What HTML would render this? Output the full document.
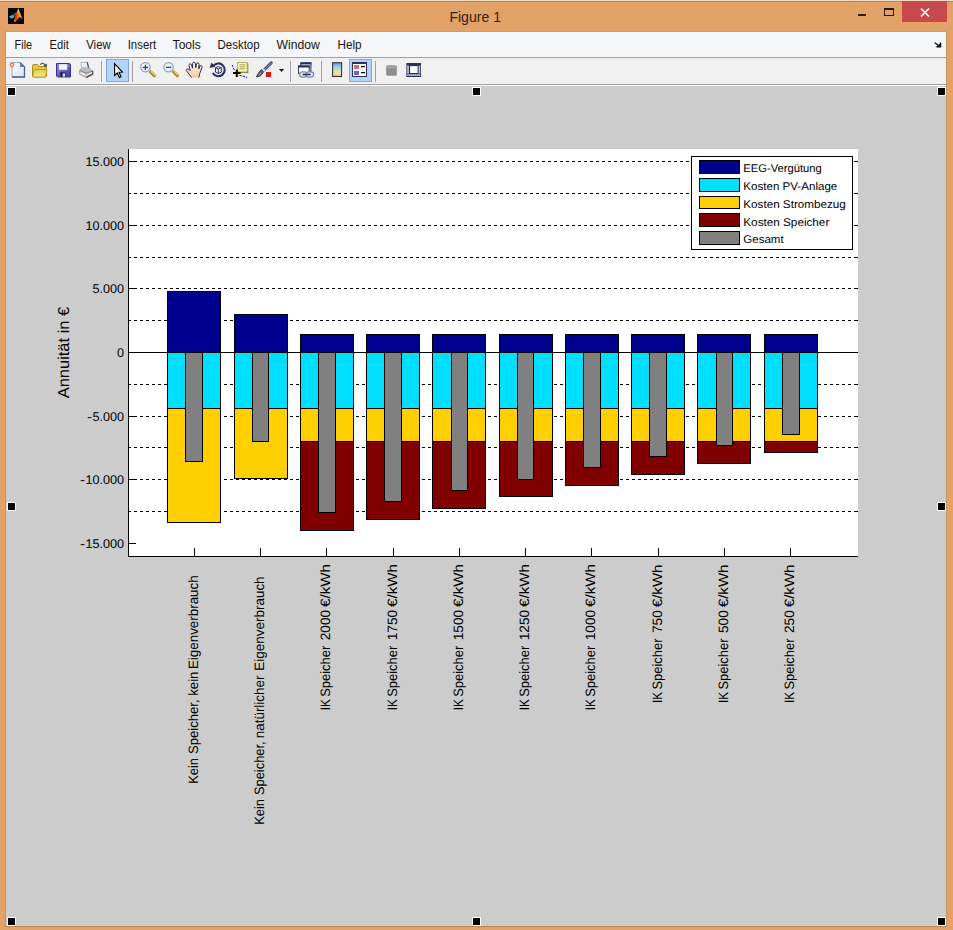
<!DOCTYPE html>
<html><head><meta charset="utf-8"><title>Figure 1</title>
<style>
html,body{margin:0;padding:0}
body{width:953px;height:930px;overflow:hidden;background:#E2A166;position:relative;font-family:"Liberation Sans",sans-serif;}
#topl0{position:absolute;left:0;top:0;width:953px;height:1px;background:#F3DCC4}
#topl1{position:absolute;left:0;top:1px;width:953px;height:1px;background:#B98555}
#title{position:absolute;left:0;top:5px;width:953px;text-align:center;font-size:15px;color:#2E1D0E;line-height:24px}
#menubar{position:absolute;left:6px;top:32px;width:940px;height:25px;background:#F5F6F7}
#menubar span{position:absolute;top:0;line-height:25px;font-size:12px;color:#111}
#msep{position:absolute;left:6px;top:57px;width:940px;height:1px;background:#A0A0A0}
#toolbar{position:absolute;left:6px;top:58px;width:940px;height:26px;background:#F0F0F0}
#tsep{position:absolute;left:6px;top:84px;width:940px;height:1px;background:#A0A0A0}
#tsep2{position:absolute;left:6px;top:85px;width:940px;height:1px;background:#FFFFFF}
#fig{position:absolute;left:6px;top:86px;width:940px;height:840px;background:#CCCCCC}
#botl{position:absolute;left:5px;top:926px;width:942px;height:1px;background:#B98555}
#lftl{position:absolute;left:5px;top:31px;width:1px;height:896px;background:#C8925F}
#rgtl{position:absolute;left:946px;top:31px;width:1px;height:896px;background:#C8925F}
#midl{position:absolute;left:5px;top:31px;width:942px;height:1px;background:#D49A64}
#chart{position:absolute;left:0;top:0}
#chart text{font-family:"Liberation Sans",sans-serif;fill:#000}
.vs{position:absolute;top:61px;width:1px;height:21px;background:#9A9A9A}
.hl{position:absolute;top:59px;height:22px;width:22px;background:#B4D2F5;border:1px solid #6FA2E0;box-sizing:content-box}
</style></head><body>
<div id="topl0"></div><div id="topl1"></div>

<div id="menubar"></div><div id="msep"></div>
<div id="toolbar"></div><div id="tsep"></div><div id="tsep2"></div>
<div id="fig"></div><div id="botl"></div><div id="lftl"></div><div id="rgtl"></div><div id="midl"></div>
<svg id="chromesvg" width="953" height="930" viewBox="0 0 953 930" style="position:absolute;left:0;top:0"><defs>
<linearGradient id="gPage" x1="0" y1="0" x2="1" y2="1"><stop offset="0" stop-color="#FFFFFF"/><stop offset="1" stop-color="#D5E2F8"/></linearGradient>
<linearGradient id="gFold" x1="0" y1="0" x2="0" y2="1"><stop offset="0" stop-color="#E0C848"/><stop offset="1" stop-color="#F8EC90"/></linearGradient>
<linearGradient id="gSave" x1="0" y1="0" x2="1" y2="1"><stop offset="0" stop-color="#8C8CE0"/><stop offset="1" stop-color="#3C3C98"/></linearGradient>
<linearGradient id="gCb" x1="0" y1="0" x2="0" y2="1"><stop offset="0" stop-color="#6C94E8"/><stop offset="0.35" stop-color="#98D4E4"/><stop offset="0.6" stop-color="#CCE8A8"/><stop offset="0.8" stop-color="#F2E090"/><stop offset="1" stop-color="#F0B494"/></linearGradient>
<linearGradient id="gHandle" x1="0" y1="0" x2="1" y2="0"><stop offset="0" stop-color="#F0DC90"/><stop offset="1" stop-color="#B08828"/></linearGradient>
<radialGradient id="gLens" cx="0.4" cy="0.35" r="0.7"><stop offset="0" stop-color="#FFFFFF"/><stop offset="1" stop-color="#CFE6F6"/></radialGradient>
<linearGradient id="gMl" x1="0" y1="0" x2="1" y2="0"><stop offset="0" stop-color="#F8D060"/><stop offset="0.5" stop-color="#E86820"/><stop offset="1" stop-color="#982810"/></linearGradient>
<linearGradient id="gMl2" x1="0" y1="0" x2="1" y2="0"><stop offset="0" stop-color="#8E2C10"/><stop offset="0.45" stop-color="#E8601C"/><stop offset="0.7" stop-color="#F68A28"/><stop offset="1" stop-color="#F0A070"/></linearGradient>
</defs>
<!-- matlab window icon -->
<g>
<rect x="8" y="8" width="16" height="16" fill="#050505"/>
<path d="M8.9 16.4 L12 15 L14.3 15.8 L13.7 17.5 L11.4 18.7 Z" fill="#4AAEE0"/>
<path d="M12 15 L16.8 11.4 L16.2 14.2 L14.3 15.8 Z" fill="#50627E" opacity="0.85"/>
<path d="M15.6 21.4 C16.8 20.6 17.6 18.6 19 17.4 C20.2 16.4 21.4 17.4 22.7 19.5 C21.5 19.6 20.4 20.8 19.4 21.8 C18 22.6 16.6 22.4 15.6 21.4 Z" fill="#3A1206" opacity="0.8"/>
<path d="M18.4 9.1 C17 11.5 15 15 13.8 19.5 C13.8 21 14.6 21.9 15.6 21.4 C16.8 20.6 17.6 18.6 19 17.4 C20.2 16.4 21.4 17.4 22.7 19.5 C21.2 16 19.8 12.4 18.4 9.1 Z" fill="url(#gMl2)"/>
<path d="M18.4 9.1 C18.9 12 19 14.5 19 17.4 C20.2 16.4 21.4 17.4 22.7 19.5 C21.2 16 19.8 12.4 18.4 9.1 Z" fill="#F4B088" opacity="0.55"/>
<path d="M18.4 9.3 C18.1 10.6 18 11.8 18.2 13" stroke="#F8DC70" stroke-width="1" fill="none" stroke-linecap="round"/>
<ellipse cx="14.9" cy="20.9" rx="0.9" ry="0.7" fill="#FFC890"/>
</g>
<!-- window buttons -->
<rect x="858" y="14" width="8" height="2" fill="#2A1A0C" shape-rendering="crispEdges"/>
<g shape-rendering="crispEdges" fill="#2A1A0C"><rect x="884" y="8" width="10" height="2"/><rect x="884" y="8" width="1" height="8"/><rect x="893" y="8" width="1" height="8"/><rect x="884" y="15" width="10" height="1"/></g>
<rect x="902" y="1" width="45" height="21" fill="#C8494D" shape-rendering="crispEdges"/>
<path d="M921 8.5 L929 16.5 M929 8.5 L921 16.5" stroke="#fff" stroke-width="1.6" fill="none"/>
<!-- menu arrow -->
<path d="M934.6 42.6 L939.6 46.4 M936.4 46.8 H940.6 V42.6" stroke="#111" stroke-width="1.3" fill="none"/>
<path d="M940.9 47 L940.9 42.4 L936.2 47 Z" fill="#111"/>
<!-- toolbar separators -->
<g shape-rendering="crispEdges" fill="#9A9EA8">
<rect x="101" y="61" width="1" height="21"/><rect x="132" y="61" width="1" height="21"/><rect x="290" y="61" width="1" height="21"/><rect x="321" y="61" width="1" height="21"/><rect x="375" y="61" width="1" height="21"/>
</g>
<!-- highlighted buttons -->
<g shape-rendering="crispEdges">
<rect x="106" y="59" width="23" height="23" fill="#7FA9DC"/><rect x="107" y="60" width="21" height="21" fill="#B4D4F4"/>
<rect x="349" y="59" width="23" height="23" fill="#7FA9DC"/><rect x="350" y="60" width="21" height="21" fill="#B4D4F4"/>
</g>
<!-- new -->
<g>
<path d="M12 62.5 H20 L24.5 67 V77 H12 Z" fill="url(#gPage)" stroke="#9AA8C8" stroke-width="1"/>
<path d="M20 62.5 L24.5 67 V77 H12" fill="none" stroke="#566080" stroke-width="1.3"/>
<path d="M20 62.5 V67 H24.5 Z" fill="#6E7AA0"/>
<circle cx="12" cy="64.8" r="1.7" fill="#FBE4D0" stroke="#D07C52" stroke-width="1.1"/>
<path d="M9.6 62.4 l0.8 0.8 M14.4 62.4 l-0.8 0.8 M9.6 67.2 l0.8 -0.8 M14.4 67.2 l-0.8 -0.8 M12 61.6 v0.8 M12 67.2 v0.8 M8.8 64.8 h0.8 M14.4 64.8 h0.8" stroke="#C86848" stroke-width="0.7" opacity="0.55"/>
</g>
<!-- open -->
<g>
<path d="M32.5 66 Q32.5 64.5 34 64.5 H37 Q38 64.5 38.5 65.5 L39 66.5 H45 Q46.5 66.5 46.5 68 V76 Q46.5 77 45.5 77 H33.5 Q32.5 77 32.5 76 Z" fill="#E4C840" stroke="#B08C18" stroke-width="1"/>
<path d="M34.8 69.5 H46 Q47 69.5 46.8 70.5 L45.6 76 Q45.4 77 44.4 77 H33.6 Q32.6 77 32.9 76 L33.8 70.5 Q34 69.5 34.8 69.5 Z" fill="url(#gFold)" stroke="#B89820" stroke-width="0.9"/>
<path d="M40.2 64.6 Q42.6 62 45 64.8" fill="none" stroke="#4A5A78" stroke-width="1.2"/>
<path d="M46.9 63.4 L46.7 67.2 L43.4 65.8 Z" fill="#2E4468"/>
</g>
<!-- save -->
<g>
<path d="M56.5 63.5 H69.5 L70.5 64.5 V77 H57.5 L56.5 76 Z" fill="url(#gSave)" stroke="#34348C" stroke-width="1"/>
<rect x="59" y="64" width="8.2" height="5.8" fill="#F4F4FF"/>
<rect x="59" y="64" width="8.2" height="1" fill="#D8D8F4"/>
<rect x="60.4" y="72.4" width="5" height="4.3" fill="#15153A"/>
<rect x="62.6" y="73.4" width="2.4" height="3.3" fill="#D8DCF4"/>
<rect x="68.3" y="65" width="1" height="2" fill="#A0A0E8"/>
</g>
<!-- print -->
<g>
<path d="M81.8 68.8 L80.8 62.6 L87.2 62.2 L88.6 68 Z" fill="#E4EEFA" stroke="#9AA8C4" stroke-width="0.8"/>
<path d="M87.2 62.2 L88.7 68" stroke="#48505C" stroke-width="1.2"/>
<path d="M79.6 70.2 L82 68 H89 L92.6 71 V74 L86.4 77.4 L79.6 74.4 Z" fill="#D0D0D0" stroke="#909090" stroke-width="0.8"/>
<path d="M82 68.4 H89 L92.2 71 L86.2 73.2 L80 70.4 Z" fill="#BDBDBD"/>
<path d="M79.8 70.4 L86.2 73.2 L92.6 71" fill="none" stroke="#767676" stroke-width="0.9"/>
<path d="M86.4 77.4 L92.6 74 V71" fill="none" stroke="#444" stroke-width="1.3"/>
<path d="M86.3 73.4 V77.2" stroke="#8A8A8A" stroke-width="0.8"/>
<path d="M80.2 72.9 L86.2 75.5 L92.2 72.5" fill="none" stroke="#F8F8F8" stroke-width="0.9"/>
</g>
<!-- pointer -->
<path d="M114.6 63.6 V75.4 L117.3 73 L119.3 77.5 L121 76.7 L119.1 72.3 L122.4 72 Z" fill="#fff" stroke="#000" stroke-width="1.15" stroke-linejoin="miter"/>
<!-- zoom in -->
<g>
<path d="M150.6 71.8 L154.3 75.5" stroke="#A88830" stroke-width="3.3" stroke-linecap="round"/>
<path d="M151 71.2 L154.8 75" stroke="#E8D078" stroke-width="1.3" stroke-linecap="round"/>
<circle cx="145.4" cy="67.3" r="4.7" fill="url(#gLens)" stroke="#969EB8" stroke-width="1.2"/>
<path d="M142.8 67.3 H148 M145.4 64.7 V69.9" stroke="#1C4A78" stroke-width="1.2"/>
</g>
<!-- zoom out -->
<g>
<path d="M173.7 71.8 L177.4 75.5" stroke="#A88830" stroke-width="3.3" stroke-linecap="round"/>
<path d="M174.1 71.2 L177.9 75" stroke="#E8D078" stroke-width="1.3" stroke-linecap="round"/>
<circle cx="168.5" cy="67.3" r="4.7" fill="url(#gLens)" stroke="#969EB8" stroke-width="1.2"/>
<path d="M165.9 67.3 H171.1" stroke="#1C4A78" stroke-width="1.3"/>
</g>
<!-- pan hand -->
<g>
<defs><linearGradient id="gPalm" x1="0" y1="0" x2="0" y2="1"><stop offset="0" stop-color="#FFFFFF"/><stop offset="0.45" stop-color="#FBE6C6"/><stop offset="1" stop-color="#F4CC98"/></linearGradient></defs>
<path d="M191.6 77.6 L186.5 70.8 Q185.8 69.6 186.9 69 Q187.9 68.6 188.9 69.4 L190.3 70.8 L189 65.6 Q188.8 64.2 189.9 63.8 Q191 63.6 191.5 64.8 L192.6 68.2 L192.6 63.6 Q192.7 62.2 194 62.2 Q195.2 62.2 195.4 63.6 L195.8 67.6 L196.4 64 Q196.8 62.8 197.9 62.9 Q199.1 63.1 199.1 64.4 L198.9 68.6 L200 66.2 Q200.7 65.2 201.6 65.6 Q202.4 66.1 202 67.4 L199.8 73.4 L198.8 77.6" fill="url(#gPalm)" stroke="#30305C" stroke-width="1"/>
<path d="M192.4 64.6 V68 M195.8 63.6 V67.4 M199.2 65.4 L198.9 68.8" stroke="#30305C" stroke-width="1"/>
</g>
<!-- rotate 3d -->
<g>
<path d="M213.06 66.13 A6.4 6.4 0 1 1 212.76 73" fill="none" stroke="#2A2E5A" stroke-width="2.1"/>
<path d="M209.6 67.9 L211.5 62.4 L215.2 66.7 Z" fill="#2A2E5A"/>
<path d="M215.5 67.7 L218.4 66.6 L221.3 67.7 V72.2 L218.4 73.5 L215.5 72.2 Z" fill="#E8EEF8" stroke="#2A2E5A" stroke-width="1"/>
<path d="M215.5 67.7 L218.4 69 L221.3 67.7 M218.4 69 V73.5" fill="none" stroke="#2A2E5A" stroke-width="0.9"/>
</g>
<!-- data cursor -->
<g>
<rect x="238.6" y="63.4" width="9.7" height="9.7" fill="#7C7C3C"/>
<rect x="237.6" y="62.4" width="9.6" height="9.6" fill="#F8F8B4" stroke="#A8A858" stroke-width="0.9"/>
<path d="M239.4 64.8 H245.4 M239.4 66.8 H245.4 M239.4 68.8 H245.4" stroke="#A4A450" stroke-width="1"/>
<path d="M232.2 65 L234.6 71" stroke="#0C0C98" stroke-width="1" stroke-dasharray="2 1.2"/>
<path d="M239.4 75.2 L247.2 77.4" stroke="#0C0C98" stroke-width="1" stroke-dasharray="2.4 1"/>
<path d="M233 73 H240.6 M236.8 69.4 V77" stroke="#000" stroke-width="2"/>
</g>
<!-- brush -->
<g>
<path d="M271.3 62.8 L263.8 70.3" stroke="#22305C" stroke-width="2.8" stroke-linecap="round"/>
<path d="M271.2 62.9 L264.2 69.9" stroke="#6A98E8" stroke-width="1.3" stroke-linecap="round"/>
<path d="M264.6 69.2 L262.8 71.2" stroke="#DDE4F0" stroke-width="2.4"/>
<path d="M263.6 71.8 Q261 77 256.4 77 Q257.8 73.4 261.2 69.6 Z" fill="#56645A" stroke="#2C342E" stroke-width="0.9"/>
<path d="M258.6 75.6 Q260 74.4 260.6 72.6" stroke="#B8C4B8" stroke-width="0.9" fill="none"/>
<rect x="266" y="72" width="5" height="5" fill="#E81010" shape-rendering="crispEdges"/>
</g>
<path d="M278.8 69 H284.2 L281.5 72 Z" fill="#1E1E1E"/>
<!-- link -->
<g>
<rect x="300.9" y="62.9" width="10" height="8.4" fill="#F4F6FB" stroke="#283060" stroke-width="1"/>
<rect x="300.4" y="62.4" width="11" height="2" fill="#283060"/>
<rect x="298.6" y="66" width="10.6" height="7.6" fill="#FFFFFF" stroke="#283060" stroke-width="1"/>
<rect x="298.1" y="65.5" width="11.6" height="2" fill="#283060"/>
<rect x="299.6" y="71.8" width="7.4" height="5.4" rx="2.7" fill="#E4EAF6" stroke="#7C8CB4" stroke-width="1.2"/>
<rect x="306.2" y="71.8" width="7.4" height="5.4" rx="2.7" fill="#E4EAF6" stroke="#7C8CB4" stroke-width="1.2"/>
<path d="M302.6 74.5 H310.6" stroke="#222C58" stroke-width="1.6"/>
</g>
<!-- colorbar -->
<rect x="332.6" y="62.7" width="9" height="13.8" fill="url(#gCb)" stroke="#3C3040" stroke-width="1.1"/>
<!-- legend icon -->
<g shape-rendering="crispEdges">
<rect x="352" y="62" width="15" height="15" fill="#2A3060"/>
<rect x="353" y="64" width="13" height="12" fill="#FFFFFF"/>
<rect x="354" y="65" width="5" height="4" fill="#D0705C"/>
<rect x="354" y="71" width="5" height="4" fill="#6460D8"/>
<rect x="361" y="66" width="4" height="1" fill="#000"/><rect x="361" y="72" width="4" height="1" fill="#000"/>
</g>
<path d="M361 67.2 H365 M361 73.2 H365" stroke="#000" stroke-width="0.6" opacity="0.6"/>
<!-- hide tools (gray box) -->
<rect x="386.2" y="65.2" width="10.6" height="10.6" rx="1.6" fill="#8E8E8E"/>
<rect x="387" y="66" width="9" height="2.4" rx="1" fill="#A4A4A4"/>
<!-- show tools (film) -->
<g>
<rect x="406.4" y="63" width="14.6" height="14" fill="#27305E"/>
<rect x="410.1" y="66.1" width="7.5" height="6.9" fill="#FFFFFF"/>
<rect x="407.3" y="65.6" width="1.5" height="8" fill="#F4F6FC"/>
<rect x="418.7" y="65.6" width="1.5" height="8" fill="#F4F6FC"/>
<rect x="407.3" y="74.4" width="12.9" height="1.4" fill="#F4F6FC"/>
<path d="M408.05 66.7 V73.6 M419.45 66.7 V73.6" stroke="#27305E" stroke-width="0.9" stroke-dasharray="0.7 1.3"/>
<path d="M408.4 75.1 H420.2" stroke="#27305E" stroke-width="0.9" stroke-dasharray="0.7 1.3"/>
</g>
<g font-family="Liberation Sans, sans-serif"><text x="449.4" y="21.6" font-size="15.3" fill="#34200E" textLength="51.6" lengthAdjust="spacingAndGlyphs">Figure 1</text><text x="14.6" y="48.8" font-size="12" fill="#151515" textLength="17.6" lengthAdjust="spacingAndGlyphs">File</text><text x="49.6" y="48.8" font-size="12" fill="#151515" textLength="19.2" lengthAdjust="spacingAndGlyphs">Edit</text><text x="86.2" y="48.8" font-size="12" fill="#151515" textLength="24.6" lengthAdjust="spacingAndGlyphs">View</text><text x="127.7" y="48.8" font-size="12" fill="#151515" textLength="28.5" lengthAdjust="spacingAndGlyphs">Insert</text><text x="172.6" y="48.8" font-size="12" fill="#151515" textLength="28.2" lengthAdjust="spacingAndGlyphs">Tools</text><text x="217.6" y="48.8" font-size="12" fill="#151515" textLength="42.0" lengthAdjust="spacingAndGlyphs">Desktop</text><text x="276.6" y="48.8" font-size="12" fill="#151515" textLength="43.3" lengthAdjust="spacingAndGlyphs">Window</text><text x="337.5" y="48.8" font-size="12" fill="#151515" textLength="24.1" lengthAdjust="spacingAndGlyphs">Help</text></g></svg>
<svg id="chart" width="953" height="930" viewBox="0 0 953 930" shape-rendering="crispEdges" text-rendering="geometricPrecision">
<rect x="128" y="149" width="730" height="408" fill="#fff"/>
<path d="M128 161.5H858" stroke="#000" stroke-width="1" stroke-dasharray="3 3" fill="none"/>
<rect x="857" y="161" width="1" height="1" fill="#000"/>
<path d="M128 225.5H858" stroke="#000" stroke-width="1" stroke-dasharray="3 3" fill="none"/>
<rect x="857" y="225" width="1" height="1" fill="#000"/>
<path d="M128 288.5H858" stroke="#000" stroke-width="1" stroke-dasharray="3 3" fill="none"/>
<rect x="857" y="288" width="1" height="1" fill="#000"/>
<path d="M128 416.5H858" stroke="#000" stroke-width="1" stroke-dasharray="3 3" fill="none"/>
<rect x="857" y="416" width="1" height="1" fill="#000"/>
<path d="M128 479.5H858" stroke="#000" stroke-width="1" stroke-dasharray="3 3" fill="none"/>
<rect x="857" y="479" width="1" height="1" fill="#000"/>
<path d="M128 193.5H858" stroke="#000" stroke-width="1" stroke-dasharray="3 3" fill="none"/>
<rect x="857" y="193" width="1" height="1" fill="#000"/>
<path d="M128 257.5H858" stroke="#000" stroke-width="1" stroke-dasharray="3 3" fill="none"/>
<rect x="857" y="257" width="1" height="1" fill="#000"/>
<path d="M128 320.5H858" stroke="#000" stroke-width="1" stroke-dasharray="3 3" fill="none"/>
<rect x="857" y="320" width="1" height="1" fill="#000"/>
<path d="M128 384.5H858" stroke="#000" stroke-width="1" stroke-dasharray="3 3" fill="none"/>
<rect x="857" y="384" width="1" height="1" fill="#000"/>
<path d="M128 447.5H858" stroke="#000" stroke-width="1" stroke-dasharray="3 3" fill="none"/>
<rect x="857" y="447" width="1" height="1" fill="#000"/>
<path d="M128 511.5H858" stroke="#000" stroke-width="1" stroke-dasharray="3 3" fill="none"/>
<rect x="857" y="511" width="1" height="1" fill="#000"/>
<rect x="167" y="291" width="54" height="62" fill="#000"/>
<rect x="168" y="292" width="52" height="60" fill="#00008F"/>
<rect x="167" y="352" width="54" height="57" fill="#000"/>
<rect x="168" y="353" width="52" height="55" fill="#00DFFF"/>
<rect x="167" y="408" width="54" height="115" fill="#000"/>
<rect x="168" y="409" width="52" height="113" fill="#FFCF00"/>
<rect x="234" y="314" width="54" height="39" fill="#000"/>
<rect x="235" y="315" width="52" height="37" fill="#00008F"/>
<rect x="234" y="352" width="54" height="57" fill="#000"/>
<rect x="235" y="353" width="52" height="55" fill="#00DFFF"/>
<rect x="234" y="408" width="54" height="71" fill="#000"/>
<rect x="235" y="409" width="52" height="69" fill="#FFCF00"/>
<rect x="300" y="334" width="54" height="19" fill="#000"/>
<rect x="301" y="335" width="52" height="17" fill="#00008F"/>
<rect x="300" y="352" width="54" height="57" fill="#000"/>
<rect x="301" y="353" width="52" height="55" fill="#00DFFF"/>
<rect x="300" y="408" width="54" height="34" fill="#000"/>
<rect x="301" y="409" width="52" height="32" fill="#FFCF00"/>
<rect x="300" y="441" width="54" height="90" fill="#000"/>
<rect x="301" y="442" width="52" height="88" fill="#800000"/>
<rect x="366" y="334" width="54" height="19" fill="#000"/>
<rect x="367" y="335" width="52" height="17" fill="#00008F"/>
<rect x="366" y="352" width="54" height="57" fill="#000"/>
<rect x="367" y="353" width="52" height="55" fill="#00DFFF"/>
<rect x="366" y="408" width="54" height="34" fill="#000"/>
<rect x="367" y="409" width="52" height="32" fill="#FFCF00"/>
<rect x="366" y="441" width="54" height="79" fill="#000"/>
<rect x="367" y="442" width="52" height="77" fill="#800000"/>
<rect x="432" y="334" width="54" height="19" fill="#000"/>
<rect x="433" y="335" width="52" height="17" fill="#00008F"/>
<rect x="432" y="352" width="54" height="57" fill="#000"/>
<rect x="433" y="353" width="52" height="55" fill="#00DFFF"/>
<rect x="432" y="408" width="54" height="34" fill="#000"/>
<rect x="433" y="409" width="52" height="32" fill="#FFCF00"/>
<rect x="432" y="441" width="54" height="68" fill="#000"/>
<rect x="433" y="442" width="52" height="66" fill="#800000"/>
<rect x="499" y="334" width="54" height="19" fill="#000"/>
<rect x="500" y="335" width="52" height="17" fill="#00008F"/>
<rect x="499" y="352" width="54" height="57" fill="#000"/>
<rect x="500" y="353" width="52" height="55" fill="#00DFFF"/>
<rect x="499" y="408" width="54" height="34" fill="#000"/>
<rect x="500" y="409" width="52" height="32" fill="#FFCF00"/>
<rect x="499" y="441" width="54" height="56" fill="#000"/>
<rect x="500" y="442" width="52" height="54" fill="#800000"/>
<rect x="565" y="334" width="54" height="19" fill="#000"/>
<rect x="566" y="335" width="52" height="17" fill="#00008F"/>
<rect x="565" y="352" width="54" height="57" fill="#000"/>
<rect x="566" y="353" width="52" height="55" fill="#00DFFF"/>
<rect x="565" y="408" width="54" height="34" fill="#000"/>
<rect x="566" y="409" width="52" height="32" fill="#FFCF00"/>
<rect x="565" y="441" width="54" height="45" fill="#000"/>
<rect x="566" y="442" width="52" height="43" fill="#800000"/>
<rect x="631" y="334" width="54" height="19" fill="#000"/>
<rect x="632" y="335" width="52" height="17" fill="#00008F"/>
<rect x="631" y="352" width="54" height="57" fill="#000"/>
<rect x="632" y="353" width="52" height="55" fill="#00DFFF"/>
<rect x="631" y="408" width="54" height="34" fill="#000"/>
<rect x="632" y="409" width="52" height="32" fill="#FFCF00"/>
<rect x="631" y="441" width="54" height="34" fill="#000"/>
<rect x="632" y="442" width="52" height="32" fill="#800000"/>
<rect x="697" y="334" width="54" height="19" fill="#000"/>
<rect x="698" y="335" width="52" height="17" fill="#00008F"/>
<rect x="697" y="352" width="54" height="57" fill="#000"/>
<rect x="698" y="353" width="52" height="55" fill="#00DFFF"/>
<rect x="697" y="408" width="54" height="34" fill="#000"/>
<rect x="698" y="409" width="52" height="32" fill="#FFCF00"/>
<rect x="697" y="441" width="54" height="23" fill="#000"/>
<rect x="698" y="442" width="52" height="21" fill="#800000"/>
<rect x="764" y="334" width="54" height="19" fill="#000"/>
<rect x="765" y="335" width="52" height="17" fill="#00008F"/>
<rect x="764" y="352" width="54" height="57" fill="#000"/>
<rect x="765" y="353" width="52" height="55" fill="#00DFFF"/>
<rect x="764" y="408" width="54" height="34" fill="#000"/>
<rect x="765" y="409" width="52" height="32" fill="#FFCF00"/>
<rect x="764" y="441" width="54" height="12" fill="#000"/>
<rect x="765" y="442" width="52" height="10" fill="#800000"/>
<rect x="185" y="352" width="18" height="110" fill="#000"/>
<rect x="186" y="353" width="16" height="108" fill="#808080"/>
<rect x="252" y="352" width="17" height="90" fill="#000"/>
<rect x="253" y="353" width="15" height="88" fill="#808080"/>
<rect x="318" y="352" width="18" height="161" fill="#000"/>
<rect x="319" y="353" width="16" height="159" fill="#808080"/>
<rect x="384" y="352" width="18" height="150" fill="#000"/>
<rect x="385" y="353" width="16" height="148" fill="#808080"/>
<rect x="451" y="352" width="17" height="139" fill="#000"/>
<rect x="452" y="353" width="15" height="137" fill="#808080"/>
<rect x="517" y="352" width="17" height="128" fill="#000"/>
<rect x="518" y="353" width="15" height="126" fill="#808080"/>
<rect x="583" y="352" width="18" height="116" fill="#000"/>
<rect x="584" y="353" width="16" height="114" fill="#808080"/>
<rect x="649" y="352" width="18" height="105" fill="#000"/>
<rect x="650" y="353" width="16" height="103" fill="#808080"/>
<rect x="716" y="352" width="17" height="94" fill="#000"/>
<rect x="717" y="353" width="15" height="92" fill="#808080"/>
<rect x="782" y="352" width="18" height="83" fill="#000"/>
<rect x="783" y="353" width="16" height="81" fill="#808080"/>
<rect x="128" y="352" width="730" height="1" fill="#000"/>
<rect x="128" y="149" width="1" height="408" fill="#000"/>
<rect x="128" y="556" width="730" height="1" fill="#000"/>
<rect x="128" y="161" width="8" height="1" fill="#000"/>
<rect x="128" y="225" width="8" height="1" fill="#000"/>
<rect x="128" y="288" width="8" height="1" fill="#000"/>
<rect x="128" y="352" width="8" height="1" fill="#000"/>
<rect x="128" y="416" width="8" height="1" fill="#000"/>
<rect x="128" y="479" width="8" height="1" fill="#000"/>
<rect x="128" y="543" width="8" height="1" fill="#000"/>
<rect x="194" y="548" width="1" height="8" fill="#000"/>
<rect x="260" y="548" width="1" height="8" fill="#000"/>
<rect x="326" y="548" width="1" height="8" fill="#000"/>
<rect x="393" y="548" width="1" height="8" fill="#000"/>
<rect x="459" y="548" width="1" height="8" fill="#000"/>
<rect x="525" y="548" width="1" height="8" fill="#000"/>
<rect x="591" y="548" width="1" height="8" fill="#000"/>
<rect x="658" y="548" width="1" height="8" fill="#000"/>
<rect x="724" y="548" width="1" height="8" fill="#000"/>
<rect x="790" y="548" width="1" height="8" fill="#000"/>
<text x="124.1" y="165.7" text-anchor="end" font-size="12.6">15.000</text>
<text x="124.1" y="229.7" text-anchor="end" font-size="12.6">10.000</text>
<text x="124.1" y="292.7" text-anchor="end" font-size="12.6">5.000</text>
<text x="124.1" y="356.7" text-anchor="end" font-size="12.6">0</text>
<text x="124.1" y="420.7" text-anchor="end" font-size="12.6">5.000</text>
<text x="86.9" y="420.7" font-size="12.6" textLength="5.0" lengthAdjust="spacingAndGlyphs">-</text>
<text x="124.1" y="483.7" text-anchor="end" font-size="12.6">10.000</text>
<text x="79.9" y="483.7" font-size="12.6" textLength="5.0" lengthAdjust="spacingAndGlyphs">-</text>
<text x="124.1" y="547.7" text-anchor="end" font-size="12.6">15.000</text>
<text x="79.9" y="547.7" font-size="12.6" textLength="5.0" lengthAdjust="spacingAndGlyphs">-</text>
<text transform="translate(69.4,398.3) rotate(-90)" font-size="15.8" textLength="91.5" lengthAdjust="spacingAndGlyphs">Annuität in €</text>
<text transform="translate(198.4,783.7) rotate(-90)" font-size="13.6" textLength="25.7" lengthAdjust="spacingAndGlyphs">Kein</text>
<text transform="translate(198.4,753.9) rotate(-90)" font-size="13.6" textLength="54.5" lengthAdjust="spacingAndGlyphs">Speicher,</text>
<text transform="translate(198.4,695.7) rotate(-90)" font-size="13.6" textLength="24.1" lengthAdjust="spacingAndGlyphs">kein</text>
<text transform="translate(198.4,669.1) rotate(-90)" font-size="13.6" textLength="93.8" lengthAdjust="spacingAndGlyphs">Eigenverbrauch</text>
<text transform="translate(264.4,824.7) rotate(-90)" font-size="13.6" textLength="25.6" lengthAdjust="spacingAndGlyphs">Kein</text>
<text transform="translate(264.4,795.0) rotate(-90)" font-size="13.6" textLength="53.6" lengthAdjust="spacingAndGlyphs">Speicher,</text>
<text transform="translate(264.4,738.2) rotate(-90)" font-size="13.6" textLength="62.6" lengthAdjust="spacingAndGlyphs">natürlicher</text>
<text transform="translate(264.4,670.7) rotate(-90)" font-size="13.6" textLength="94.3" lengthAdjust="spacingAndGlyphs">Eigenverbrauch</text>
<text transform="translate(330.4,710.3) rotate(-90)" font-size="13.6" textLength="11.1" lengthAdjust="spacingAndGlyphs">IK</text>
<text transform="translate(330.4,696.8) rotate(-90)" font-size="13.6" textLength="51.0" lengthAdjust="spacingAndGlyphs">Speicher</text>
<text transform="translate(330.4,640.3) rotate(-90)" font-size="13.6" textLength="30.4" lengthAdjust="spacingAndGlyphs">2000</text>
<text transform="translate(330.4,606.9) rotate(-90)" font-size="13.6" textLength="42.7" lengthAdjust="spacingAndGlyphs">€/kWh</text>
<text transform="translate(397.4,710.3) rotate(-90)" font-size="13.6" textLength="11.1" lengthAdjust="spacingAndGlyphs">IK</text>
<text transform="translate(397.4,696.8) rotate(-90)" font-size="13.6" textLength="51.0" lengthAdjust="spacingAndGlyphs">Speicher</text>
<text transform="translate(397.4,640.3) rotate(-90)" font-size="13.6" textLength="30.4" lengthAdjust="spacingAndGlyphs">1750</text>
<text transform="translate(397.4,606.9) rotate(-90)" font-size="13.6" textLength="42.7" lengthAdjust="spacingAndGlyphs">€/kWh</text>
<text transform="translate(463.4,710.3) rotate(-90)" font-size="13.6" textLength="11.1" lengthAdjust="spacingAndGlyphs">IK</text>
<text transform="translate(463.4,696.8) rotate(-90)" font-size="13.6" textLength="51.0" lengthAdjust="spacingAndGlyphs">Speicher</text>
<text transform="translate(463.4,640.3) rotate(-90)" font-size="13.6" textLength="30.4" lengthAdjust="spacingAndGlyphs">1500</text>
<text transform="translate(463.4,606.9) rotate(-90)" font-size="13.6" textLength="42.7" lengthAdjust="spacingAndGlyphs">€/kWh</text>
<text transform="translate(529.4,710.3) rotate(-90)" font-size="13.6" textLength="11.1" lengthAdjust="spacingAndGlyphs">IK</text>
<text transform="translate(529.4,696.8) rotate(-90)" font-size="13.6" textLength="51.0" lengthAdjust="spacingAndGlyphs">Speicher</text>
<text transform="translate(529.4,640.3) rotate(-90)" font-size="13.6" textLength="30.4" lengthAdjust="spacingAndGlyphs">1250</text>
<text transform="translate(529.4,606.9) rotate(-90)" font-size="13.6" textLength="42.7" lengthAdjust="spacingAndGlyphs">€/kWh</text>
<text transform="translate(595.4,710.3) rotate(-90)" font-size="13.6" textLength="11.1" lengthAdjust="spacingAndGlyphs">IK</text>
<text transform="translate(595.4,696.8) rotate(-90)" font-size="13.6" textLength="51.0" lengthAdjust="spacingAndGlyphs">Speicher</text>
<text transform="translate(595.4,640.3) rotate(-90)" font-size="13.6" textLength="30.4" lengthAdjust="spacingAndGlyphs">1000</text>
<text transform="translate(595.4,606.9) rotate(-90)" font-size="13.6" textLength="42.7" lengthAdjust="spacingAndGlyphs">€/kWh</text>
<text transform="translate(662.4,703.0) rotate(-90)" font-size="13.6" textLength="11.1" lengthAdjust="spacingAndGlyphs">IK</text>
<text transform="translate(662.4,689.5) rotate(-90)" font-size="13.6" textLength="51.0" lengthAdjust="spacingAndGlyphs">Speicher</text>
<text transform="translate(662.4,633.0) rotate(-90)" font-size="13.6" textLength="22.8" lengthAdjust="spacingAndGlyphs">750</text>
<text transform="translate(662.4,607.2) rotate(-90)" font-size="13.6" textLength="42.7" lengthAdjust="spacingAndGlyphs">€/kWh</text>
<text transform="translate(728.4,703.0) rotate(-90)" font-size="13.6" textLength="11.1" lengthAdjust="spacingAndGlyphs">IK</text>
<text transform="translate(728.4,689.5) rotate(-90)" font-size="13.6" textLength="51.0" lengthAdjust="spacingAndGlyphs">Speicher</text>
<text transform="translate(728.4,633.0) rotate(-90)" font-size="13.6" textLength="22.8" lengthAdjust="spacingAndGlyphs">500</text>
<text transform="translate(728.4,607.2) rotate(-90)" font-size="13.6" textLength="42.7" lengthAdjust="spacingAndGlyphs">€/kWh</text>
<text transform="translate(794.4,703.0) rotate(-90)" font-size="13.6" textLength="11.1" lengthAdjust="spacingAndGlyphs">IK</text>
<text transform="translate(794.4,689.5) rotate(-90)" font-size="13.6" textLength="51.0" lengthAdjust="spacingAndGlyphs">Speicher</text>
<text transform="translate(794.4,633.0) rotate(-90)" font-size="13.6" textLength="22.8" lengthAdjust="spacingAndGlyphs">250</text>
<text transform="translate(794.4,607.2) rotate(-90)" font-size="13.6" textLength="42.7" lengthAdjust="spacingAndGlyphs">€/kWh</text>
<rect x="691" y="156" width="162" height="94" fill="#000"/>
<rect x="692" y="157" width="160" height="92" fill="#fff"/>
<rect x="699" y="160" width="41" height="14" fill="#000"/>
<rect x="700" y="161" width="39" height="12" fill="#00008F"/>
<text x="743.3" y="171.9" font-size="11.2" textLength="78.5" lengthAdjust="spacingAndGlyphs">EEG-Vergütung</text>
<rect x="699" y="178" width="41" height="14" fill="#000"/>
<rect x="700" y="179" width="39" height="12" fill="#00DFFF"/>
<text x="743.3" y="189.9" font-size="11.2" textLength="94" lengthAdjust="spacingAndGlyphs">Kosten PV-Anlage</text>
<rect x="699" y="196" width="41" height="13" fill="#000"/>
<rect x="700" y="197" width="39" height="11" fill="#FFCF00"/>
<text x="743.3" y="208.3" font-size="11.2" textLength="102.5" lengthAdjust="spacingAndGlyphs">Kosten Strombezug</text>
<rect x="699" y="213" width="41" height="14" fill="#000"/>
<rect x="700" y="214" width="39" height="12" fill="#800000"/>
<text x="743.3" y="225.7" font-size="11.2" textLength="86" lengthAdjust="spacingAndGlyphs">Kosten Speicher</text>
<rect x="699" y="231" width="41" height="14" fill="#000"/>
<rect x="700" y="232" width="39" height="12" fill="#808080"/>
<text x="743.3" y="243.3" font-size="11.2" textLength="40.3" lengthAdjust="spacingAndGlyphs">Gesamt</text>
<rect x="7" y="87" width="9" height="9" fill="#fff"/>
<rect x="8" y="88" width="7" height="7" fill="#000"/>
<rect x="7" y="502" width="9" height="9" fill="#fff"/>
<rect x="8" y="503" width="7" height="7" fill="#000"/>
<rect x="7" y="917" width="9" height="9" fill="#fff"/>
<rect x="8" y="918" width="7" height="7" fill="#000"/>
<rect x="472" y="87" width="9" height="9" fill="#fff"/>
<rect x="473" y="88" width="7" height="7" fill="#000"/>
<rect x="472" y="917" width="9" height="9" fill="#fff"/>
<rect x="473" y="918" width="7" height="7" fill="#000"/>
<rect x="937" y="87" width="9" height="9" fill="#fff"/>
<rect x="938" y="88" width="7" height="7" fill="#000"/>
<rect x="937" y="502" width="9" height="9" fill="#fff"/>
<rect x="938" y="503" width="7" height="7" fill="#000"/>
<rect x="937" y="917" width="9" height="9" fill="#fff"/>
<rect x="938" y="918" width="7" height="7" fill="#000"/>
</svg>
</body></html>
